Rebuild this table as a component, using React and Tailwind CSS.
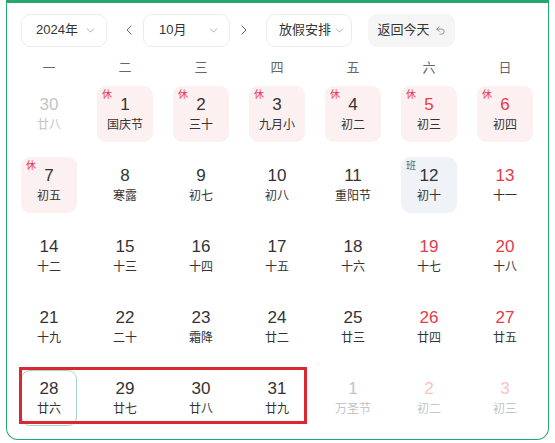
import React from "react";
import { ChevronDown, ChevronLeft, ChevronRight, Undo2 } from "lucide-react";

const weeks = [
  [
    { d: 30, l: "廿八", o: true },
    { d: 1, l: "国庆节", h: "休" },
    { d: 2, l: "三十", h: "休" },
    { d: 3, l: "九月小", h: "休" },
    { d: 4, l: "初二", h: "休" },
    { d: 5, l: "初三", h: "休", w: true },
    { d: 6, l: "初四", h: "休", w: true },
  ],
  [
    { d: 7, l: "初五", h: "休" },
    { d: 8, l: "寒露" },
    { d: 9, l: "初七" },
    { d: 10, l: "初八" },
    { d: 11, l: "重阳节" },
    { d: 12, l: "初十", b: true },
    { d: 13, l: "十一", w: true },
  ],
  [
    { d: 14, l: "十二" },
    { d: 15, l: "十三" },
    { d: 16, l: "十四" },
    { d: 17, l: "十五" },
    { d: 18, l: "十六" },
    { d: 19, l: "十七", w: true },
    { d: 20, l: "十八", w: true },
  ],
  [
    { d: 21, l: "十九" },
    { d: 22, l: "二十" },
    { d: 23, l: "霜降" },
    { d: 24, l: "廿二" },
    { d: 25, l: "廿三" },
    { d: 26, l: "廿四", w: true },
    { d: 27, l: "廿五", w: true },
  ],
  [
    { d: 28, l: "廿六", t: true },
    { d: 29, l: "廿七" },
    { d: 30, l: "廿八" },
    { d: 31, l: "廿九" },
    { d: 1, l: "万圣节", o: true },
    { d: 2, l: "初二", o: true, w: true },
    { d: 3, l: "初三", o: true, w: true },
  ],
];

function Cell({ c }) {
  let box = "relative w-[56px] h-[56px] rounded-[9px] flex flex-col items-center";
  if (c.h) box += " bg-[#fdf0f0]";
  if (c.b) box += " bg-[#eff2f6]";
  if (c.t) box += " border border-[#a9d3c6]";
  let num = "text-[#333333]";
  let lun = "text-[#333333]";
  if (c.w) num = "text-[#e8394a]";
  if (c.o) {
    num = c.w ? "text-[#f5c2c7]" : "text-[#c4c4c4]";
    lun = "text-[#c4c4c4]";
  }
  return (
    <div className="flex justify-center">
      <div className={box}>
        {c.h && (
          <span className="absolute left-[5px] top-[3px] text-[10px] leading-[12px] text-[#e8394a]">
            {c.h}
          </span>
        )}
        {c.b && (
          <span className="absolute left-[5px] top-[3px] text-[10px] leading-[12px] text-[#666666]">
            班
          </span>
        )}
        <span className={`${c.t ? "mt-[7px]" : "mt-[8px]"} text-[17px] leading-[22px] ${num}`}>{c.d}</span>
        <span className={`text-[12px] leading-[16px] mt-[1px] ${lun}`}>{c.l}</span>
      </div>
    </div>
  );
}

export default function App() {
  return (
    <div
      className="relative w-[555px] h-[443px] bg-white overflow-hidden"
      style={{ fontFamily: '"Liberation Sans", "Noto Sans CJK SC", sans-serif' }}
    >
      <div className="ml-[6px] w-[543px] h-[440px] border border-t-[3px] border-[#28a86c] rounded-b-[12px] pl-[4px]">
        <div className="flex items-center pl-[10px] pt-[10px] h-[44px] whitespace-nowrap">
          <div className="w-[86px] h-[33px] border border-[#ececec] rounded-[9px] flex items-center justify-between pl-[14px] pr-[9px] text-[13px] text-[#333333]">
            <span>2024年</span>
            <ChevronDown size={13} strokeWidth={1.5} className="text-[#999999]" />
          </div>
          <ChevronLeft size={16} strokeWidth={1.5} className="text-[#666666] ml-[14px] mr-[6px]" />
          <div className="w-[87px] h-[33px] border border-[#ececec] rounded-[9px] flex items-center justify-between pl-[15px] pr-[9px] text-[13px] text-[#333333]">
            <span>10月</span>
            <ChevronDown size={13} strokeWidth={1.5} className="text-[#999999]" />
          </div>
          <ChevronRight size={16} strokeWidth={1.5} className="text-[#666666] ml-[6px] mr-[14px]" />
          <div className="w-[86px] h-[33px] border border-[#ececec] rounded-[9px] flex items-center justify-between pl-[12px] pr-[5px] text-[13px] text-[#333333]">
            <span>放假安排</span>
            <ChevronDown size={13} strokeWidth={1.5} className="text-[#999999] shrink-0" />
          </div>
          <div className="ml-[16px] w-[87px] h-[33px] bg-[#f5f5f5] rounded-[9px] flex items-center justify-center gap-[5px] text-[13px] text-[#333333]">
            <span>返回今天</span>
            <Undo2 size={11} strokeWidth={1.5} className="text-[#666666]" />
          </div>
        </div>
        <div className="grid grid-cols-[repeat(7,76px)] mt-[10px] h-[22px] items-center text-[13px] text-[#666666]">
          {["一", "二", "三", "四", "五", "六", "日"].map((w) => (
            <div key={w} className="text-center">
              {w}
            </div>
          ))}
        </div>
        <div className="mt-[7px] flex flex-col">
          {weeks.map((wk, i) => (
            <div key={i} className="grid grid-cols-[repeat(7,76px)] h-[71px]">
              {wk.map((c, j) => (
                <Cell key={j} c={c} />
              ))}
            </div>
          ))}
        </div>
      </div>
      <div className="absolute left-[19px] top-[367px] w-[288px] h-[57px] border-[3px] border-[#dc2630]" />
    </div>
  );
}
